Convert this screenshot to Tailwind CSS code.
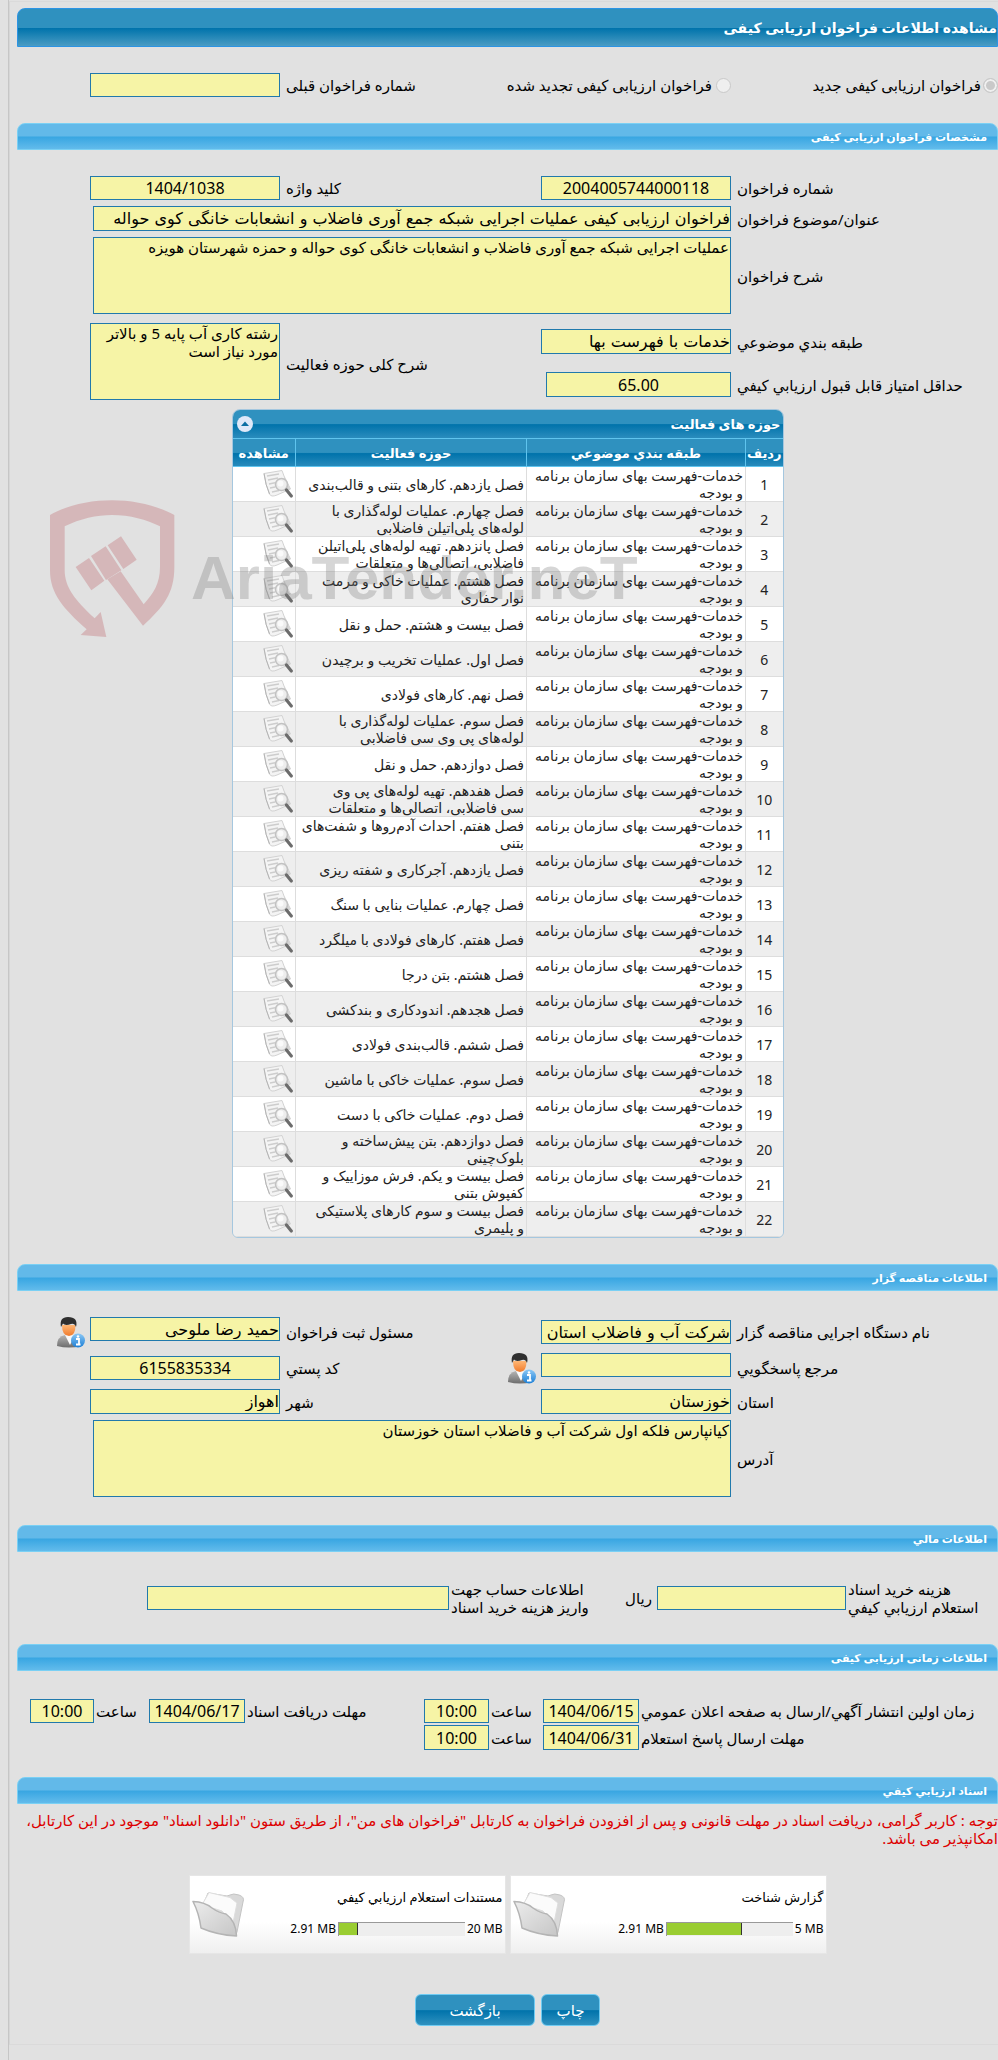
<!DOCTYPE html>
<html lang="fa" dir="rtl">
<head>
    <meta charset="UTF-8" />
    <meta name="viewport" content="width=device-width, initial-scale=1.0" />
    <title>مشاهده اطلاعات فراخوان ارزیابی کیفی</title>
    <script src="https://cdn.jsdelivr.net/npm/@tailwindcss/browser@4"></script>
</head>
<body class="bg-[#e1e1e1] text-black text-[15px] leading-[18px] font-['Noto_Sans','DejaVu_Sans',sans-serif]">

<!-- Icons -->
<svg class="absolute top-0 size-0" xmlns="http://www.w3.org/2000/svg">
    <linearGradient id="gSuit" x1="0" x2="0" y1="0" y2="1"><stop offset="0" stop-color="#b5b5b5" /><stop offset="1" stop-color="#6d6d6d" /></linearGradient>
    <linearGradient id="gFace" x1="0" x2="0" y1="0" y2="1"><stop offset="0" stop-color="#ffb775" /><stop offset="1" stop-color="#f07a2c" /></linearGradient>
    <linearGradient id="gInfo" x1="0" x2="0" y1="0" y2="1"><stop offset="0" stop-color="#8cc8f5" /><stop offset="1" stop-color="#1c7fd6" /></linearGradient>
    <linearGradient id="gFolder" x1="0" x2="1" y1="0" y2="1"><stop offset="0" stop-color="#ececec" /><stop offset="1" stop-color="#c6c6c6" /></linearGradient>
    <symbol id="icon-view" viewBox="0 0 30 28">
        <path d="M1 3.5 L19 .5 L21 6 L27.500 19 L14 25 Q8 27.500 6.500 24 Q2.500 15 1 3.500Z" fill="#f4f4f4" stroke="#d2d2d2" stroke-width="1" />
        <path d="M1 3.500 Q2.500 15 6.500 24" stroke="#b4b4b4" stroke-width="1" fill="none" />
        <path d="M4 6 L16 4 M5 10 L15 8 M6 14 L12 12.800 M7 18 L12 17 M9 22 L16 20.500" stroke="#cdcdcd" stroke-width="1.400" />
        <path d="M21 6 L27.500 19 L22 21Z" fill="#d4d4d4" />
        <circle cx="18.500" cy="14.500" r="6" fill="#ededed" stroke="#c2c2c2" stroke-width="1.600" />
        <circle cx="17.500" cy="13.500" r="3" fill="#fafafa" />
        <path d="M23.500 20 L28.300 26" stroke="#6c6c6c" stroke-width="3.200" stroke-linecap="round" />
    </symbol>
    <symbol id="icon-user" viewBox="0 0 28 31">
        <path d="M0 29 Q0 19.500 8 18 L17 18 Q23 19 24 29 Q12 32 0 29Z" fill="url(#gSuit)" />
        <path d="M8 18 L13 28 L18 18Z" fill="#fafafa" />
        <path d="M5 8 Q5 19 12 19 Q18.500 19 18.500 8Z" fill="url(#gFace)" />
        <path d="M4 10 Q2 0 11 0 Q21.500 0 19 10 Q17.500 6 14 7 Q8 9 6 6.500 Q5 8 4 10Z" fill="#2f2f2f" />
        <circle cx="21" cy="23.500" r="7" fill="url(#gInfo)" />
        <circle cx="21" cy="19.500" r="1.300" fill="#fff" />
        <path d="M19 22 H22 V27 M19 27.500 H23.500" stroke="#fff" stroke-width="1.800" fill="none" />
    </symbol>
    <symbol id="icon-folder" viewBox="0 0 54 48">
        <path d="M11 14 L16 2 L35 5 L38 4 Q41 2 47 4 Q53 6 51 11 L45 41 L43 45Z" fill="#d9d9d9" stroke="#c4c4c4" stroke-width="1" />
        <path d="M11 12 L17 1.500 L38 6.500 L45 12 L41 32 L30 20 Q20 17 12 14Z" fill="#fbfbfb" stroke="#dedede" stroke-width="1" />
        <path d="M1 10.500 Q13 11 20 17 Q27 22 34 23 Q44 30 44.500 45 Q25 44 9 37 Q7 22 1 10.500Z" fill="url(#gFolder)" stroke="#b4b4b4" stroke-width="1.500" stroke-linejoin="round" />
    </symbol>
</svg>

<div class="ml-2 min-h-screen border-l border-[#c6c6c6] pt-px overflow-hidden">
    <main class="relative border-l border-l-[#d6d6d6] border-y border-y-[#dadada] pt-1.5 pl-[7px] pb-[18px]">

        <!-- Page title -->
        <h1 class="h-[39px] flex items-center rounded-t-lg border border-[#2c94e4] bg-linear-[to_bottom,#2f91bf_50%,#0073ab_52%,#4a9cc4] text-white text-[14px] font-bold">مشاهده اطلاعات فراخوان ارزیابی کیفی</h1>

        <div class="mt-[26px] h-6 grid grid-cols-[267fr_190fr_261fr_190fr_73fr]">
            <label class="min-w-0 flex items-center gap-0.5 whitespace-nowrap"><input type="radio" name="kind" checked disabled class="appearance-none shrink-0 size-[15px] rounded-full border border-[#c9c9c9] bg-[#c9c9c9] ring-2 ring-inset ring-[#efefef]" />فراخوان ارزیابی کیفی جدید</label>
            <label class="min-w-0 flex items-center gap-1 whitespace-nowrap"><input type="radio" name="kind" disabled class="appearance-none shrink-0 size-[15px] rounded-full border border-[#c9c9c9] bg-[#efefef]" />فراخوان ارزیابی کیفی تجدید شده</label>
            <label for="prevNo" class="self-center text-end pl-1.5">شماره فراخوان قبلی</label>
            <input id="prevNo" readonly class="w-full h-6 border border-[#2179ac] bg-[#f6f4a6]" />
        </div>

        <!-- Call details -->
        <h2 class="mt-[26px] h-[27px] flex items-center pr-2.5 rounded-t-lg border border-[#7ad0f4] bg-linear-[to_bottom,#62b9e9_48%,#38a6e2_52%,#62bbeb] text-white text-[11px] font-bold">مشخصات فراخوان ارزیابی کیفی</h2>
        <div class="mt-[26px] grid grid-cols-[267fr_190fr_261fr_187fr_3fr_73fr] gap-y-1.5 items-center">
            <label for="callNo" class="text-end pl-1.5">شماره فراخوان</label>
            <input id="callNo" readonly value="2004005744000118" class="w-full h-6 border border-[#2179ac] bg-[#f6f4a6] text-[16px] text-center" />
            <label for="keyword" class="text-end pl-1.5">کلید واژه</label>
            <input id="keyword" readonly value="1404/1038" class="col-span-2 w-full h-6 border border-[#2179ac] bg-[#f6f4a6] text-[16px] text-center" />
            <span></span>

            <label for="subject" class="text-end pl-1.5">عنوان/موضوع فراخوان</label>
            <input id="subject" readonly value="فراخوان ارزیابی کیفی عملیات اجرایی شبکه جمع آوری فاضلاب و انشعابات خانگی کوی حواله" class="col-span-3 w-full h-[25px] border border-[#2179ac] bg-[#f6f4a6] text-[16px] font-['DejaVu_Sans',sans-serif]" />
            <span class="col-span-2"></span>

            <label for="desc" class="text-end pl-1.5">شرح فراخوان</label>
            <textarea id="desc" readonly class="col-span-3 w-full h-[77px] px-px resize-none border border-[#2179ac] bg-[#f6f4a6] block">عملیات اجرایی شبکه جمع آوری فاضلاب و انشعابات خانگی کوی حواله و حمزه شهرستان هویزه</textarea>
        </div>
        <div class="mt-[9px] grid grid-cols-[267fr_5fr_185fr_261fr_190fr_73fr] grid-rows-[37px_49px] items-center">
            <label for="category" class="text-end pl-1.5">طبقه بندي موضوعي</label>
            <input id="category" readonly value="خدمات با فهرست بها" class="col-span-2 w-full h-[25px] border border-[#2179ac] bg-[#f6f4a6] text-[16px] font-['DejaVu_Sans',sans-serif]" />
            <label for="scope" class="row-span-2 text-end pl-1.5 pb-1">شرح کلی حوزه فعالیت</label>
            <textarea id="scope" readonly class="row-span-2 self-start w-full h-[77px] px-px resize-none border border-[#2179ac] bg-[#f6f4a6] block">رشته کاری آب پایه 5 و بالاتر مورد نیاز است</textarea>
            <span class="row-span-2"></span>
            <label for="minScore" class="text-end pl-1.5">حداقل امتیاز قابل قبول ارزيابي كيفي</label>
            <div class="col-span-2 pl-[5px]"><input id="minScore" readonly value="65.00" class="w-full h-[25px] border border-[#2179ac] bg-[#f6f4a6] text-[16px] text-center block" /></div>
        </div>

        <!-- Activity fields -->
        <div class="w-[552px] mx-auto rounded-t-lg rounded-b-md border border-[#a5c7df] overflow-hidden">
            <div class="h-7 pr-0.5 pl-1 flex items-center justify-between bg-linear-[to_bottom,#2f91bf_50%,#0073ab_52%,#2a8cbd] text-white text-[13px] font-bold">
                <span>حوزه های فعالیت</span>
                <button type="button" title="بستن" class="size-4 rounded-full bg-[#dfe8f8] flex items-center justify-center">
                    <svg class="size-2" viewBox="0 0 8 8"><path d="M0 6 L4 1.500 L8 6Z" fill="#0b6ea3" /></svg>
                </button>
            </div>
            <table class="w-full table-fixed border-collapse text-[#222]">
                <thead>
                    <tr class="h-7 bg-linear-[to_bottom,#2f91bf_48%,#0073ab_52%,#2a8cbd] text-white text-[13px] font-bold">
                        <th class="w-[37px] border-y border-[#5fc4ee]">ردیف</th>
                        <th class="w-[219px] border border-[#5fc4ee]">طبقه بندي موضوعي</th>
                        <th class="border border-[#5fc4ee]">حوزه فعالیت</th>
                        <th class="w-[63px] border-y border-[#5fc4ee]">مشاهده</th>
                    </tr>
                </thead>
                <tbody id="fieldRows" class="text-[14px] leading-[17px]"></tbody>
            </table>
        </div>

        <!-- Tender holder -->
        <h2 class="mt-[26px] h-[27px] flex items-center pr-2.5 rounded-t-lg border border-[#7ad0f4] bg-linear-[to_bottom,#62b9e9_48%,#38a6e2_52%,#62bbeb] text-white text-[11px] font-bold">اطلاعات مناقصه گزار</h2>
        <div class="mt-[26px] grid grid-cols-[267fr_190fr_261fr_187fr_3fr_73fr] grid-rows-[30px_30px_25px_77px] gap-y-1.5 items-center">
            <label for="org" class="text-end pl-1.5">نام دستگاه اجرایی مناقصه گزار</label>
            <input id="org" readonly value="شرکت آب و فاضلاب استان" class="w-full h-6 border border-[#2179ac] bg-[#f6f4a6] text-[16px] font-['DejaVu_Sans',sans-serif]" />
            <label for="registrar" class="text-end pl-1.5">مسئول ثبت فراخوان</label>
            <input id="registrar" readonly value="حمید رضا ملوحی" class="self-start col-span-2 w-full h-6 border border-[#2179ac] bg-[#f6f4a6] text-[16px] font-['DejaVu_Sans',sans-serif]" />
            <button type="button" title="اطلاعات مسئول" class="mr-[5px] justify-self-start"><svg class="w-7 h-[31px]"><use href="#icon-user" /></svg></button>

            <label for="contact" class="text-end pl-1.5">مرجع پاسخگويي</label>
            <input id="contact" readonly class="self-start w-full h-6 border border-[#2179ac] bg-[#f6f4a6] text-[16px]" />
            <div class="flex items-center justify-between">
                <button type="button" title="اطلاعات مرجع" class="mr-[5px]"><svg class="w-7 h-[31px]"><use href="#icon-user" /></svg></button>
                <label for="postal" class="pl-1.5">كد پستي</label>
            </div>
            <input id="postal" readonly value="6155835334" class="col-span-2 w-full h-6 border border-[#2179ac] bg-[#f6f4a6] text-[16px] text-center" />
            <span></span>

            <label for="province" class="text-end pl-1.5">استان</label>
            <input id="province" readonly value="خوزستان" class="w-full h-[25px] border border-[#2179ac] bg-[#f6f4a6] text-[16px] font-['DejaVu_Sans',sans-serif]" />
            <label for="city" class="text-end pl-1.5">شهر</label>
            <input id="city" readonly value="اهواز" class="col-span-2 w-full h-[25px] border border-[#2179ac] bg-[#f6f4a6] text-[16px] font-['DejaVu_Sans',sans-serif]" />
            <span></span>

            <label for="address" class="text-end pl-1.5">آدرس</label>
            <textarea id="address" readonly class="col-span-3 w-full h-[77px] px-px resize-none border border-[#2179ac] bg-[#f6f4a6] block">کیانپارس فلکه اول شرکت آب و فاضلاب استان خوزستان</textarea>
        </div>

        <!-- Financial -->
        <h2 class="mt-7 h-[27px] flex items-center pr-2.5 rounded-t-lg border border-[#7ad0f4] bg-linear-[to_bottom,#62b9e9_48%,#38a6e2_52%,#62bbeb] text-white text-[11px] font-bold">اطلاعات مالي</h2>
        <div class="mt-7 grid grid-cols-[152fr_189fr_208fr_302fr_130fr] items-center">
            <label for="fee" class="text-end pl-0.5">هزینه خرید اسناد<br />استعلام ارزيابي كيفي</label>
            <input id="fee" readonly class="w-full h-6 border border-[#2179ac] bg-[#f6f4a6] text-[16px]" />
            <div class="flex items-center justify-between pr-[5px] pl-0.5 whitespace-nowrap">
                <span>ریال</span>
                <label for="account" class="text-end">اطلاعات حساب جهت<br />واریز هزینه خرید اسناد</label>
            </div>
            <input id="account" readonly class="w-full h-6 border border-[#2179ac] bg-[#f6f4a6] text-[16px]" />
        </div>

        <!-- Schedule -->
        <h2 class="mt-7 h-[27px] flex items-center pr-2.5 rounded-t-lg border border-[#7ad0f4] bg-linear-[to_bottom,#62b9e9_48%,#38a6e2_52%,#62bbeb] text-white text-[11px] font-bold">اطلاعات زمانی ارزیابی کیفی</h2>
        <div class="mt-7 grid grid-cols-[359fr_96fr_54fr_65fr_179fr_96fr_55fr_64fr_13fr] gap-y-0.5 items-center whitespace-nowrap">
            <label for="pubDate" class="text-end pl-0.5">زمان اولین انتشار آگهي/ارسال به صفحه اعلان عمومي</label>
            <input id="pubDate" readonly value="1404/06/15" class="w-full h-6 border border-[#2179ac] bg-[#f6f4a6] text-[16px] text-center" />
            <label for="pubTime" class="text-end pl-0.5">ساعت</label>
            <input id="pubTime" readonly value="10:00" class="w-full h-6 border border-[#2179ac] bg-[#f6f4a6] text-[16px] text-center" />
            <label for="docDate" class="text-end pl-0.5">مهلت دریافت اسناد</label>
            <input id="docDate" readonly value="1404/06/17" class="w-full h-6 border border-[#2179ac] bg-[#f6f4a6] text-[16px] text-center" />
            <label for="docTime" class="text-end pl-0.5">ساعت</label>
            <input id="docTime" readonly value="10:00" class="w-full h-6 border border-[#2179ac] bg-[#f6f4a6] text-[16px] text-center" />
            <span></span>

            <label for="replyDate" class="text-end pl-0.5">مهلت ارسال پاسخ استعلام</label>
            <input id="replyDate" readonly value="1404/06/31" class="w-full h-[25px] border border-[#2179ac] bg-[#f6f4a6] text-[16px] text-center" />
            <label for="replyTime" class="text-end pl-0.5">ساعت</label>
            <input id="replyTime" readonly value="10:00" class="w-full h-[25px] border border-[#2179ac] bg-[#f6f4a6] text-[16px] text-center" />
        </div>

        <!-- Documents -->
        <h2 class="mt-[27px] h-[27px] flex items-center pr-2.5 rounded-t-lg border border-[#7ad0f4] bg-linear-[to_bottom,#62b9e9_48%,#38a6e2_52%,#62bbeb] text-white text-[11px] font-bold">اسناد ارزيابي كيفي</h2>
        <p class="mt-[7px] text-[#dd0000]">توجه : کاربر گرامی، دریافت اسناد در مهلت قانونی و پس از افزودن فراخوان به کارتابل "فراخوان های من"، از طریق ستون "دانلود اسناد" موجود در این کارتابل، امکانپذیر می باشد.</p>

        <div class="mt-7 flex justify-center gap-1 text-[12px]">
            <div class="w-[317px] h-[79px] flex items-center justify-between px-0.5 border border-[#e6e6e6] bg-linear-[to_bottom,#ffffff_60%,#efefef]">
                <div class="flex flex-col gap-3.5 pb-1">
                    <span class="text-[13px]">گزارش شناخت</span>
                    <div class="flex items-center gap-0.5">
                        <span dir="ltr">5 MB</span>
                        <div dir="ltr" class="w-[127px] h-3.5 bg-[#eee] border-t border-l border-[#999]"><div class="h-3 bg-[#9acd32] border-r border-[#333]" style="width: 60%"></div></div>
                        <span dir="ltr">2.91 MB</span>
                    </div>
                </div>
                <svg class="w-[54px] h-12"><use href="#icon-folder" /></svg>
            </div>
            <div class="w-[317px] h-[79px] flex items-center justify-between px-0.5 border border-[#e6e6e6] bg-linear-[to_bottom,#ffffff_60%,#efefef]">
                <div class="flex flex-col gap-3.5 pb-1">
                    <span class="text-[13px]">مستندات استعلام ارزيابي كيفي</span>
                    <div class="flex items-center gap-0.5">
                        <span dir="ltr">20 MB</span>
                        <div dir="ltr" class="w-[127px] h-3.5 bg-[#eee] border-t border-l border-[#999]"><div class="h-3 bg-[#9acd32] border-r border-[#333]" style="width: 15%"></div></div>
                        <span dir="ltr">2.91 MB</span>
                    </div>
                </div>
                <svg class="w-[54px] h-12"><use href="#icon-folder" /></svg>
            </div>
        </div>

        <div class="mt-10 flex justify-center gap-1.5 text-white">
            <button type="button" class="w-[59px] h-8 rounded-md border border-[#6fcbf2] bg-linear-[to_bottom,#2f91bf_50%,#0073ab_52%,#2f91bf]">چاپ</button>
            <button type="button" class="w-[120px] h-8 rounded-md border border-[#6fcbf2] bg-linear-[to_bottom,#2f91bf_50%,#0073ab_52%,#2f91bf]">بازگشت</button>
        </div>

        <!-- Watermark -->
        <div dir="ltr" class="absolute left-10 top-[498px] flex gap-4 pointer-events-none select-none">
            <svg class="w-[125px] h-[138px] opacity-35" viewBox="150 90 375 412" fill="#c16a70">
                <path d="M319 500 L302 425 L284 444 C225 390 194 350 194 300 V168 C240 145 290 134 336 134 C390 134 440 148 480 168 V290 C480 340 460 370 431 402 L362 303 L322 327 L429 466 C490 410 523 370 523 290 V134 C470 105 400 90 336 90 C270 90 200 105 150 134 V300 C150 370 190 415 260 477 L242 494Z" />
                <path d="M273 257 L317 228 L364 300 L318 329Z M227 290 L267 263 L313 331 L274 360Z M323 225 L363 198 L410 268 L370 296Z" />
            </svg>
            <span class="pt-8 text-[62px] leading-[92px] font-bold text-[#777]/30 font-['Liberation_Sans',sans-serif]">AriaTender.neT</span>
        </div>
    </main>
</div>

<script>
    const fieldRows = document.getElementById('fieldRows');

    const fields = [
        'فصل یازدهم. کارهای بتنی و قالب‌بندی',
        'فصل چهارم. عملیات لوله‌گذاری با لوله‌های پلی‌اتیلن فاضلابی',
        'فصل پانزدهم. تهیه لوله‌های پلی‌اتیلن فاضلابی، اتصالی‌ها و متعلقات',
        'فصل هشتم. عملیات خاکی و مرمت نوار حفاری',
        'فصل بیست و هشتم. حمل و نقل',
        'فصل اول. عملیات تخریب و برچیدن',
        'فصل نهم. کارهای فولادی',
        'فصل سوم. عملیات لوله‌گذاری با لوله‌های پی وی سی فاضلابی',
        'فصل دوازدهم. حمل و نقل',
        'فصل هفدهم. تهیه لوله‌های پی وی سی&nbsp;فاضلابی، اتصالی‌ها و متعلقات',
        'فصل هفتم. احداث آدم‌روها و شفت‌های بتنی',
        'فصل یازدهم. آجرکاری و شفته ریزی',
        'فصل چهارم. عملیات بنایی با سنگ',
        'فصل هفتم. کارهای فولادی با میلگرد',
        'فصل هشتم. بتن درجا',
        'فصل هجدهم. اندودکاری و بندکشی',
        'فصل ششم. قالب‌بندی فولادی',
        'فصل سوم. عملیات خاکی با ماشین',
        'فصل دوم. عملیات خاکی با دست',
        'فصل دوازدهم. بتن پیش‌ساخته و بلوک‌چینی',
        'فصل بیست و یکم. فرش موزاییک و کفپوش بتنی',
        'فصل بیست و سوم کارهای پلاستیکی و&nbsp;پلیمری',
    ];

    // one row per activity field
    fieldRows.innerHTML = fields.map((name, i) => `
        <tr class="h-[35px] bg-white even:bg-[#eee]">
            <td class="border-b border-[#ddd] text-center">${i + 1}</td>
            <td class="border-b border-x border-[#ddd] px-0.5">خدمات-فهرست بهای سازمان برنامه و بودجه</td>
            <td class="border-b border-x border-[#ddd] px-0.5">${name}</td>
            <td class="border-b border-[#ddd] px-0.5"><button type="button" title="مشاهده" class="block"><svg class="w-[30px] h-7"><use href="#icon-view" /></svg></button></td>
        </tr>`).join('');
</script>
</body>
</html>
